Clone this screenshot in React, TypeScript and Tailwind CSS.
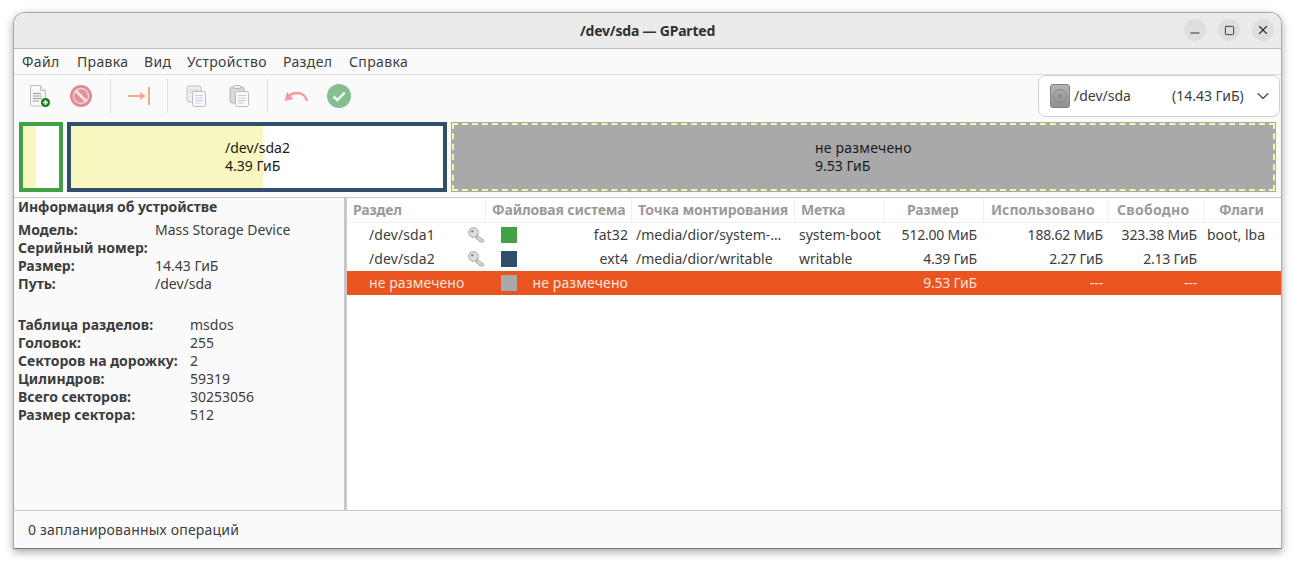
import React from 'react';
import { ChevronDown, Minus, Square, X } from 'lucide-react';

const COLS = 'grid grid-cols-[139px_146px_163px_90px_99px_124px_97px_1fr]';

const menus = [
  { label: 'Файл', w: 'w-[55px]' },
  { label: 'Правка', w: 'w-[67px]' },
  { label: 'Вид', w: 'w-[43px]' },
  { label: 'Устройство', w: 'w-[96px]' },
  { label: 'Раздел', w: 'w-[66px]' },
  { label: 'Справка', w: 'w-[70px]' },
];

const NewIcon = () => (
  <svg width="24" height="24" viewBox="0 0 24 24" fill="none">
    <path d="M3.500 1.500h10l5 5v14a1.500 1.500 0 0 1-1.500 1.500h-12a1.500 1.500 0 0 1-1.500-1.500z" fill="#fafafa" stroke="#bdbdbd" />
    <path d="M13.500 1.500v5h5" fill="#e8e8e8" stroke="#bdbdbd" />
    <path d="M6 9.500h8M6 12h9M6 14.500h9M6 17h6" stroke="#9a9a9a" />
    <circle cx="18.500" cy="18.500" r="4.500" fill="#0f7d1c" />
    <path d="M16 18.500h5M18.500 16v5" stroke="#fff" strokeWidth="1.600" />
  </svg>
);

const DeleteIcon = () => (
  <svg width="24" height="24" viewBox="0 0 24 24" fill="none">
    <circle cx="12" cy="12" r="10" fill="#e2909a" stroke="#dd8b96" strokeWidth="2" />
    <circle cx="12" cy="12" r="7.500" stroke="#f3d0d4" strokeWidth="1.400" />
    <path d="M6.500 6.500l11 11" stroke="#f6e0e3" strokeWidth="3" />
  </svg>
);

const ResizeIcon = () => (
  <svg width="24" height="24" viewBox="0 0 24 24" fill="none">
    <path d="M1 12h17" stroke="#f7a78b" strokeWidth="2" />
    <path d="M13 8l5.500 4-5.500 4z" fill="#f7a78b" />
    <path d="M22 3v18" stroke="#f7a78b" strokeWidth="2" />
  </svg>
);

const CopyIcon = () => (
  <svg width="24" height="24" viewBox="0 0 24 24" fill="none">
    <rect x="3" y="2" width="14" height="16" rx="2" fill="#efefef" stroke="#c0c0c0" />
    <path d="M5.500 6h9M5.500 8.500h9" stroke="#cfcfcf" />
    <rect x="8.500" y="7.500" width="13" height="15" rx="2" fill="#fafafa" stroke="#bcbcbc" />
    <path d="M11 11.500h8M11 14h8M11 16.500h8M11 19h6" stroke="#c9c9f0" />
  </svg>
);

const PasteIcon = () => (
  <svg width="24" height="24" viewBox="0 0 24 24" fill="none">
    <rect x="3" y="3" width="14" height="16" rx="2" fill="#d9d9d9" stroke="#b5b5b5" />
    <rect x="6.500" y="1.500" width="7" height="3" rx="1.200" fill="#f0f0f0" stroke="#b5b5b5" />
    <rect x="8.500" y="7.500" width="13" height="15" rx="2" fill="#fafafa" stroke="#bcbcbc" />
    <path d="M11 11.500h8M11 14h8M11 16.500h8M11 19h6" stroke="#c9c9f0" />
  </svg>
);

const UndoIcon = () => (
  <svg width="26" height="24" viewBox="0 0 26 24" fill="none">
    <path d="M24 17c-1-5-5-8-10-8-3 0-6 1-8 3" stroke="#f59aa0" strokeWidth="2.400" />
    <path d="M1.500 17l2.500-9 6.500 7z" fill="#f59aa0" />
  </svg>
);

const ApplyIcon = () => (
  <svg width="24" height="24" viewBox="0 0 24 24" fill="none">
    <circle cx="12" cy="12" r="12" fill="#85bf8f" />
    <path d="M6.500 12.500l3.800 3.500 7.500-7.500" stroke="#f6fbf6" strokeWidth="2.400" />
  </svg>
);

const DiskIcon = () => (
  <svg width="20" height="24" viewBox="0 0 20 24" fill="none">
    <defs>
      <linearGradient id="diskFill" x1="0" y1="0" x2="0" y2="1">
        <stop offset="0" stopColor="#b5b5b5" />
        <stop offset="1" stopColor="#8f8f8f" />
      </linearGradient>
    </defs>
    <rect x="0.500" y="0.500" width="19" height="23" rx="2.500" fill="url(#diskFill)" stroke="#808080" />
    <circle cx="10" cy="12" r="6.500" stroke="#858585" />
    <circle cx="10" cy="12" r="1.800" stroke="#777777" />
  </svg>
);

const KeyIcon = () => (
  <svg width="17" height="17" viewBox="0 0 17 17" fill="none">
    <circle cx="5.500" cy="5.500" r="4.800" fill="#e0e0e0" stroke="#a0a0a0" />
    <circle cx="4.300" cy="4.300" r="1.300" fill="#8f8f8f" />
    <path d="M8.500 8l7.500 5.500-1.500 2-1.700-1-1 .5-1-1.500-2.500-1.500z" fill="#d4d4d4" stroke="#a0a0a0" strokeWidth="0.900" />
  </svg>
);

const Sep = () => <div className="mx-[16px] h-[34px] w-px bg-[#dedede]" />;

const ToolSlot = ({ children, w }: { children: React.ReactNode; w: string }) => (
  <div className={`flex justify-center ${w}`}>{children}</div>
);

const InfoRow = ({ k, v, w }: { k: string; v?: string; w: string }) => (
  <div className="flex h-[18px] items-center">
    <span className={`shrink-0 font-bold text-[#3d3d3d] ${w}`}>{k}</span>
    <span>{v}</span>
  </div>
);

const headers = [
  { t: 'Раздел', c: 'pl-[6px]' },
  { t: 'Файловая система', c: 'pl-[6px]' },
  { t: 'Точка монтирования', c: 'pl-[6px]' },
  { t: 'Метка', c: 'pl-[6px]' },
  { t: 'Размер', c: 'pl-[22px]' },
  { t: 'Использовано', c: 'pl-[7px] tracking-[0px]' },
  { t: 'Свободно', c: 'pl-[9px] tracking-[0.3px]' },
  { t: 'Флаги', c: 'pl-[14px]' },
];

const rows = [
  {
    name: '/dev/sda1', key: true, color: 'bg-[#43a047]', fs: 'fat32', mount: '/media/dior/system-…',
    label: 'system-boot', size: '512.00 МиБ', used: '188.62 МиБ', free: '323.38 МиБ', flags: 'boot, lba',
  },
  {
    name: '/dev/sda2', key: true, color: 'bg-[#314e6c]', fs: 'ext4', mount: '/media/dior/writable',
    label: 'writable', size: '4.39 ГиБ', used: '2.27 ГиБ', free: '2.13 ГиБ', flags: '',
  },
  {
    name: 'не размечено', key: false, color: 'bg-[#a9a9a9]', fs: 'не размечено', mount: '',
    label: '', size: '9.53 ГиБ', used: '---', free: '---', flags: '', selected: true,
  },
];

export default function App() {
  return (
    <div className="h-[566px] w-[1295px] overflow-hidden bg-white pl-[13px] pt-[12px] font-['Noto_Sans','Open_Sans',sans-serif] text-[14px] leading-[18px] text-[#3d3d3d]">
      <div className="flex h-[537px] w-[1269px] flex-col overflow-hidden rounded-t-[12px] border border-[#a8a8a8] border-b-[#777777] bg-[#fafafa] shadow-[0_3px_8px_rgba(0,0,0,0.35)]">
        {/* title bar */}
        <div className="relative flex h-[36px] shrink-0 items-center justify-center border-b border-[#bdbdbd] bg-[#ebebeb]">
          <span className="font-bold tracking-[-0.2px] text-[#303030]">/dev/sda — GParted</span>
          <div className="absolute right-[7px] top-[6px] flex gap-[12px] text-[#303030]">
            <button className="flex size-[22px] items-center justify-center rounded-full bg-[#dedede]">
              <Minus size={14} className="translate-y-[3px]" />
            </button>
            <button className="flex size-[22px] items-center justify-center rounded-full bg-[#dedede]">
              <Square size={11} />
            </button>
            <button className="flex size-[22px] items-center justify-center rounded-full bg-[#dedede]">
              <X size={14} />
            </button>
          </div>
        </div>

        {/* menu */}
        <div className="flex h-[26px] shrink-0 items-center border-b border-[#dcdcdc] pl-[8px] tracking-[0.35px]">
          {menus.map((m) => (
            <span key={m.label} className={m.w}>{m.label}</span>
          ))}
        </div>

        {/* toolbar */}
        <div className="flex h-[44px] shrink-0 items-center pb-[2px] pl-[12px] pr-[1px]">
          <ToolSlot w="w-[26px]"><NewIcon /></ToolSlot>
          <ToolSlot w="w-[26px] ml-[16px]"><DeleteIcon /></ToolSlot>
          <Sep />
          <ToolSlot w="w-[24px]"><ResizeIcon /></ToolSlot>
          <Sep />
          <ToolSlot w="w-[24px]"><CopyIcon /></ToolSlot>
          <ToolSlot w="w-[24px] ml-[19px]"><PasteIcon /></ToolSlot>
          <Sep />
          <ToolSlot w="w-[26px] -ml-[1px]"><UndoIcon /></ToolSlot>
          <ToolSlot w="w-[24px] ml-[18px]"><ApplyIcon /></ToolSlot>
          <div className="ml-auto flex h-[42px] w-[242px] items-center rounded-[8px] border border-[#cfcfcf] bg-white pl-[11px]">
            <DiskIcon />
            <span className="ml-[4px] w-[98px]">/dev/sda</span>
            <span className="w-[81px]">(14.43 ГиБ)</span>
            <ChevronDown size={20} strokeWidth={1.4} className="text-[#4a4a4a]" />
          </div>
        </div>

        {/* partition map */}
        <div className="flex h-[78px] shrink-0 items-start gap-[4px] pl-[5px] pt-[3px] text-[#1a1a1a]">
          <div className="flex h-[70px] w-[44px] border-4 border-[#43a047] bg-white">
            <div className="w-[13px] bg-[#f7f7bf]" />
          </div>
          <div className="relative h-[70px] w-[380px] border-4 border-[#314e6c] bg-white">
            <div className="h-full w-[192px] bg-[#f7f7bf]" />
            <div className="absolute left-[154px] top-[13px]">
              <div>/dev/sda2</div>
              <div>4.39 ГиБ</div>
            </div>
          </div>
          <div className="h-[70px] w-[825px] bg-[#a9a9a9] p-px">
            <div className="flex h-full items-center border-2 border-dashed border-[#f7f7a8] pl-[361px]">
              <div className="tracking-[0.2px]">
                <div>не размечено</div>
                <div className="tracking-normal">9.53 ГиБ</div>
              </div>
            </div>
          </div>
        </div>

        {/* main */}
        <div className="flex min-h-0 flex-1 border-t border-[#c8c8c8]">
          <div className="w-[330px] shrink-0 pl-[4px]">
            <div className="flex h-[18px] items-center font-bold tracking-[-0.07px]">Информация об устройстве</div>
            <div className="mt-[5px]">
              <InfoRow k="Модель:" v="Mass Storage Device" w="w-[137px]" />
              <InfoRow k="Серийный номер:" w="w-[137px]" />
              <InfoRow k="Размер:" v="14.43 ГиБ" w="w-[137px]" />
              <InfoRow k="Путь:" v="/dev/sda" w="w-[137px]" />
            </div>
            <div className="mt-[23px]">
              <InfoRow k="Таблица разделов:" v="msdos" w="w-[172px]" />
              <InfoRow k="Головок:" v="255" w="w-[172px]" />
              <InfoRow k="Секторов на дорожку:" v="2" w="w-[172px]" />
              <InfoRow k="Цилиндров:" v="59319" w="w-[172px]" />
              <InfoRow k="Всего секторов:" v="30253056" w="w-[172px]" />
              <InfoRow k="Размер сектора:" v="512" w="w-[172px]" />
            </div>
          </div>
          <div className="w-[3px] shrink-0 bg-[#c8c8c8]" />
          <div className="min-w-0 flex-1 bg-white">
            <div className={`${COLS} h-[25px] border-b border-[#f0f0f0] font-bold tracking-[-0.15px] text-[#9a9a9a]`}>
              {headers.map((h) => (
                <div key={h.t} className={`flex items-center whitespace-nowrap border-r border-[#f0f0f0] last:border-r-0 ${h.c}`}>
                  {h.t}
                </div>
              ))}
            </div>
            {rows.map((r) => (
              <div
                key={r.name}
                className={`${COLS} h-[24px] items-center whitespace-nowrap ${r.selected ? 'bg-[#e95420] text-[#fbe3da]' : 'text-[#3d3d3d]'}`}
              >
                <div className="flex items-center justify-between pl-[22px] pr-[1px]">
                  <span className="tracking-[0.1px]">{r.name}</span>
                  {r.key && <KeyIcon />}
                </div>
                <div className="flex items-center justify-between pl-[15px] pr-[4px]">
                  <span className={`size-[16px] ${r.color}`} />
                  <span className="tracking-[0.1px]">{r.fs}</span>
                </div>
                <div className="pl-[4px]">{r.mount}</div>
                <div className="pl-[4px]">{r.label}</div>
                <div className="pr-[7px] text-right tracking-[-0.2px]">{r.size}</div>
                <div className="pr-[5px] text-right tracking-[-0.2px]">{r.used}</div>
                <div className="pr-[8px] text-right tracking-[-0.2px]">{r.free}</div>
                <div className="pl-[2px]">{r.flags}</div>
              </div>
            ))}
          </div>
        </div>

        {/* status bar */}
        <div className="flex h-[38px] shrink-0 items-center border-t border-[#c8c8c8] pl-[14px] tracking-[0.2px]">
          0 запланированных операций
        </div>
      </div>
    </div>
  );
}
